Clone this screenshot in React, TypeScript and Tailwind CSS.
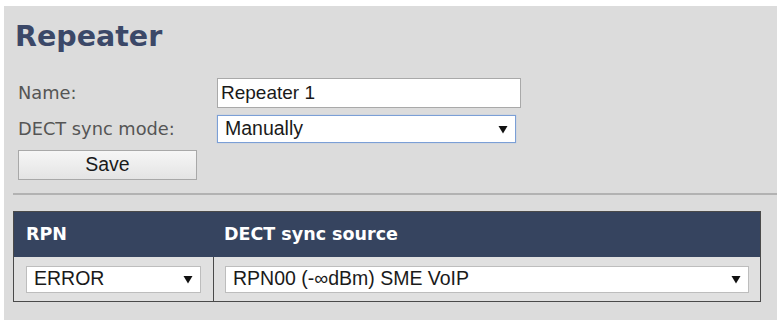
import React from "react";

function Arrow() {
  return (
    <svg width="10" height="9" viewBox="0 0 10 9" className="shrink-0">
      <path d="M0.5 1 L9.5 1 L5 8.5 Z" fill="#111" />
    </svg>
  );
}

function SelectBox({
  value,
  className,
}: {
  value: string;
  className: string;
}) {
  return (
    <div
      className={
        "flex items-center justify-between bg-white pl-[7px] pr-[7px] text-[19.5px] text-[#1a1a1a] " +
        className
      }
    >
      <span className="leading-none">{value}</span>
      <Arrow />
    </div>
  );
}

export default function App() {
  return (
    <div className="h-[320px] w-[782px] overflow-hidden bg-white pl-[4px] pr-[5px] pt-[6px] font-['Liberation_Sans',Arial,sans-serif]">
      <div className="h-full bg-[#dcdcdc] pl-[9px] pt-[12px]">
        <h1 className="ml-[2px] h-[38px] font-['DejaVu_Sans',Verdana,sans-serif] text-[28.5px] font-bold leading-[38px] text-[#3b4868]">
          Repeater
        </h1>

        <div className="mt-[22px] pl-[5px]">
          <div className="flex h-[30px] items-center">
            <span className="w-[199px] font-['DejaVu_Sans',Verdana,sans-serif] text-[17.8px] text-[#555]">
              Name:
            </span>
            <div className="flex h-[30px] w-[304px] items-center border border-[#a9a9a9] bg-white pl-[3px] text-[19px] text-[#1a1a1a]">
              Repeater 1
            </div>
          </div>
          <div className="mt-[7px] flex h-[28px] items-center">
            <span className="w-[199px] font-['DejaVu_Sans',Verdana,sans-serif] text-[17.8px] text-[#555]">
              DECT sync mode:
            </span>
            <SelectBox
              value="Manually"
              className="h-[28px] w-[299px] border border-[#7b9fd6] shadow-[0_0_1px_#9db7e0]"
            />
          </div>
          <button className="mt-[7px] flex h-[30px] w-[179px] items-center justify-center border border-[#a8a8a8] bg-gradient-to-b from-[#f6f6f6] to-[#e4e4e4] text-[19.5px] text-[#1a1a1a]">
            Save
          </button>
        </div>

        <div className="mt-[13px] h-[2px] bg-[#b2b2b2]" />

        <div className="mt-[16px] w-[748px] border border-[#4a4a4a]">
          <div className="flex h-[45px] items-center bg-[#36445f] font-['DejaVu_Sans',Verdana,sans-serif] text-[17.5px] font-bold text-white">
            <span className="w-[199px] pl-[12px]">RPN</span>
            <span className="pl-[11px]">DECT sync source</span>
          </div>
          <div className="flex h-[44px] bg-[#e0e0e0]">
            <div className="flex w-[200px] items-center border-r border-[#4a4a4a] pl-[12px]">
              <SelectBox
                value="ERROR"
                className="h-[27px] w-[175px] border border-[#bdbdbd]"
              />
            </div>
            <div className="flex flex-1 items-center pl-[11px]">
              <SelectBox
                value="RPN00 (-∞dBm) SME VoIP"
                className="h-[27px] w-[524px] border border-[#bdbdbd]"
              />
            </div>
          </div>
        </div>
      </div>
    </div>
  );
}
